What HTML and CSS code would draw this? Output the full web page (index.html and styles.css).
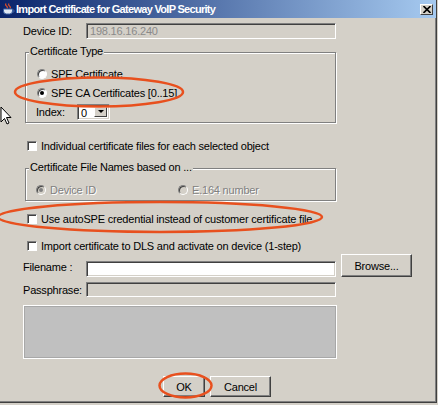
FILE: index.html
```html
<!DOCTYPE html>
<html>
<head>
    <meta charset="UTF-8">
    <title>Import Certificate for Gateway VoIP Security</title>
    <link rel="stylesheet" href="styles.css">
</head>
<body>
<div class="window">
    <div class="titlebar">
        <svg class="app-icon" width="13" height="12" viewBox="0 0 13 12">
            <path d="M4 0.5 Q3 2 4.5 3 Q6 4 5 5.5" fill="none" stroke="#e0502a" stroke-width="1.2"/>
            <path d="M7 0.5 Q6 2 7.5 3 Q9 4 8 5.5" fill="none" stroke="#e0502a" stroke-width="1.2"/>
            <path d="M1.5 6 H10.5 V8 Q10.5 11 7.5 11 H4.5 Q1.5 11 1.5 8 Z" fill="#dfe8f4" stroke="#3a5fa0" stroke-width="1"/>
            <path d="M10.5 7 H12 V9 H10" fill="none" stroke="#3a5fa0" stroke-width="1"/>
        </svg>
        <span class="title">Import Certificate for Gateway VoIP Security</span>
        <span class="close-btn">
            <svg width="8" height="7" viewBox="0 0 8 7">
                <path d="M0.5 0 L7.5 7 M7.5 0 L0.5 7" stroke="#000" stroke-width="1.6"/>
            </svg>
        </span>
    </div>

    <div class="content">
        <div class="row row-device">
            <span class="label">Device ID:</span>
            <span class="field field-off">198.16.16.240</span>
        </div>

        <div class="group group-type">
            <span class="group-title">Certificate Type</span>
            <div class="group-rows">
                <div class="opt"><span class="radio"></span>SPE Certificate</div>
                <div class="opt"><span class="radio on"></span>SPE CA Certificates [0..15]</div>
                <div class="opt">
                    <span class="index-label">Index:</span>
                    <span class="combo">
                        <span class="combo-value">0</span>
                        <span class="combo-btn"><span class="arrow"></span></span>
                    </span>
                </div>
            </div>
        </div>

        <div class="check-row row-individual"><span class="checkbox"></span>Individual certificate files for each selected object</div>

        <div class="group group-names">
            <span class="group-title">Certificate File Names based on ...</span>
            <div class="group-rows names-rows">
                <div class="opt opt-off opt-wide"><span class="radio on off"></span>Device ID</div>
                <div class="opt opt-off"><span class="radio off"></span>E.164 number</div>
            </div>
        </div>

        <div class="check-row row-auto"><span class="checkbox"></span>Use autoSPE credential instead of customer certificate file</div>
        <div class="check-row row-import"><span class="checkbox"></span>Import certificate to DLS and activate on device (1-step)</div>

        <div class="row row-file">
            <span class="label">Filename :</span>
            <span class="field field-white"></span>
            <span class="btn btn-browse">Browse...</span>
        </div>
        <div class="row row-pass">
            <span class="label">Passphrase:</span>
            <span class="field field-off"></span>
        </div>

        <div class="message-box"></div>

        <div class="buttons">
            <span class="btn btn-ok">OK</span>
            <span class="btn btn-cancel">Cancel</span>
        </div>
    </div>

    <!-- annotations drawn over the dialog -->
    <svg class="marks" width="436" height="402" viewBox="0 0 436 402">
        <ellipse cx="99" cy="92" rx="84" ry="14.5" fill="none" stroke="#e8501e" stroke-width="2.5"/>
        <ellipse cx="160" cy="217" rx="162" ry="15" fill="none" stroke="#e8501e" stroke-width="2.5"/>
        <ellipse cx="185.5" cy="385.5" rx="26" ry="12" fill="none" stroke="#e8501e" stroke-width="2.5"/>
        <path d="M1 107 L1 122 L4.5 118.5 L7 124 L9 123 L6.5 117.5 L11 117.5 Z" fill="#fff" stroke="#000" stroke-width="1" stroke-linejoin="round"/>
    </svg>
</div>
</body>
</html>
```

FILE: styles.css
```css
* {
    margin: 0;
    padding: 0;
    box-sizing: border-box;
}

html, body {
    background: #d4d0c8;
}

body {
    font-family: "Liberation Sans", Arial, sans-serif;
    font-size: 11px;
    letter-spacing: -0.2px;
    color: #000;
}

.window {
    position: relative;
    width: 437px;
    height: 403px;
    background: #d4d0c8;
    border-right: 1px solid #404040;
    border-bottom: 1px solid #404040;
    box-shadow: inset -1px -1px #808080;
}

/* title bar */
.titlebar {
    display: flex;
    align-items: center;
    height: 18px;
    padding: 0 3px 0 2px;
    background: linear-gradient(to right, #0a246a, #a6caf0);
}

.app-icon {
    display: block;
}

.title {
    margin-left: 1px;
    color: #fff;
    font-weight: bold;
    font-size: 11px;
    letter-spacing: -0.7px;
}

.close-btn {
    display: flex;
    align-items: center;
    justify-content: center;
    margin-left: auto;
    width: 13px;
    height: 11px;
    background: #d4d0c8;
    border-top: 1px solid #fff;
    border-left: 1px solid #fff;
    border-right: 1px solid #404040;
    border-bottom: 1px solid #404040;
}

/* body */
.content {
    padding: 5px 0 0 23px;
}

.row {
    display: flex;
    align-items: center;
}

.label {
    width: 63px;
}

.field {
    width: 250px;
    height: 16px;
    padding-left: 3px;
    line-height: 14px;
    border-top: 1px solid #808080;
    border-left: 1px solid #808080;
    border-bottom: 1px solid #fff;
    border-right: 1px solid #fff;
    box-shadow: inset 1px 1px #404040, inset -1px -1px #d4d0c8;
}

.field-off {
    background: #d4d0c8;
    color: #8a8a8a;
}

.field-white {
    background: #fff;
}

/* groups */
.group {
    margin-left: 2px;
    width: 311px;
    border: 1px solid #808080;
    box-shadow: inset 1px 1px #fff, 1px 1px #fff;
}

.group-type {
    margin-top: 13px;
}

.group-names {
    margin-top: 13px;
}

.group-title {
    display: block;
    width: fit-content;
    height: 13px;
    margin: -8px 0 0 3px;
    padding: 0 1px;
    line-height: 13px;
    background: #d4d0c8;
}

.group-rows {
    padding: 6px 0 1px 11px;
}

.names-rows {
    display: flex;
    padding-left: 10px;
}

.opt {
    display: flex;
    align-items: center;
    gap: 4px;
    height: 19px;
}

.opt-wide {
    width: 142px;
}

.opt-off {
    color: #808080;
    text-shadow: 1px 1px #fff;
}

.radio {
    position: relative;
    width: 10px;
    height: 10px;
    border-radius: 50%;
    background: #fff;
    border: 1px solid;
    border-color: #808080 #fff #fff #808080;
    box-shadow: inset 1px 1px #404040;
}

.radio.on::after {
    content: "";
    position: absolute;
    left: 2px;
    top: 2px;
    width: 4px;
    height: 4px;
    border-radius: 50%;
    background: #000;
}

.radio.off {
    background: #d4d0c8;
}

.radio.off.on::after {
    background: #808080;
}

.index-label {
    width: 37px;
    margin-left: -1px;
}

.combo {
    display: flex;
    width: 33px;
    height: 16px;
    padding: 2px;
    background: #fff;
    border-top: 1px solid #808080;
    border-left: 1px solid #808080;
    border-bottom: 1px solid #fff;
    border-right: 1px solid #fff;
    box-shadow: inset 1px 1px #404040, inset -1px -1px #d4d0c8;
}

.combo-value {
    flex: 1;
    padding-left: 1px;
    line-height: 12px;
}

.combo-btn {
    display: flex;
    align-items: center;
    justify-content: center;
    width: 13px;
    background: #d4d0c8;
    border-top: 1px solid #fff;
    border-left: 1px solid #fff;
    border-right: 1px solid #404040;
    border-bottom: 1px solid #404040;
}

.arrow {
    width: 0;
    height: 0;
    border-left: 3px solid transparent;
    border-right: 3px solid transparent;
    border-top: 3px solid #000;
}

/* check boxes */
.check-row {
    display: flex;
    align-items: center;
    gap: 4px;
    height: 19px;
    margin-left: 4px;
}

.row-individual {
    margin-top: 13px;
}

.row-auto {
    margin-top: 8px;
}

.row-import {
    height: 17px;
    margin-top: 9px;
}

.checkbox {
    width: 10px;
    height: 10px;
    background: #fff;
    border-top: 1px solid #808080;
    border-left: 1px solid #808080;
    border-bottom: 1px solid #fff;
    border-right: 1px solid #fff;
    box-shadow: inset 1px 1px #404040;
}

/* file rows */
.row-file {
    align-items: flex-end;
    height: 23px;
}

.row-file .label {
    align-self: center;
    padding-top: 3px;
}

.btn {
    display: flex;
    align-items: center;
    justify-content: center;
    background: #d4d0c8;
    border-top: 1px solid #fff;
    border-left: 1px solid #fff;
    border-right: 1px solid #404040;
    border-bottom: 1px solid #404040;
    box-shadow: inset -1px -1px #808080;
}

.btn-browse {
    width: 71px;
    height: 23px;
    margin-left: 5px;
}

.row-pass {
    margin-top: 5px;
}

.row-pass .field {
    height: 15px;
}

.message-box {
    width: 314px;
    height: 54px;
    margin-top: 8px;
    background: #c0c0c0;
    border: 1px solid #fff;
    box-shadow: inset 0 0 0 1px #a8a8a8;
}

.buttons {
    display: flex;
    gap: 5px;
    margin-top: 17px;
    padding-left: 140px;
}

.btn-ok {
    width: 42px;
    height: 21px;
}

.btn-cancel {
    width: 61px;
    height: 21px;
}

.marks {
    position: absolute;
    left: 0;
    top: 0;
    pointer-events: none;
    overflow: visible;
}
```
